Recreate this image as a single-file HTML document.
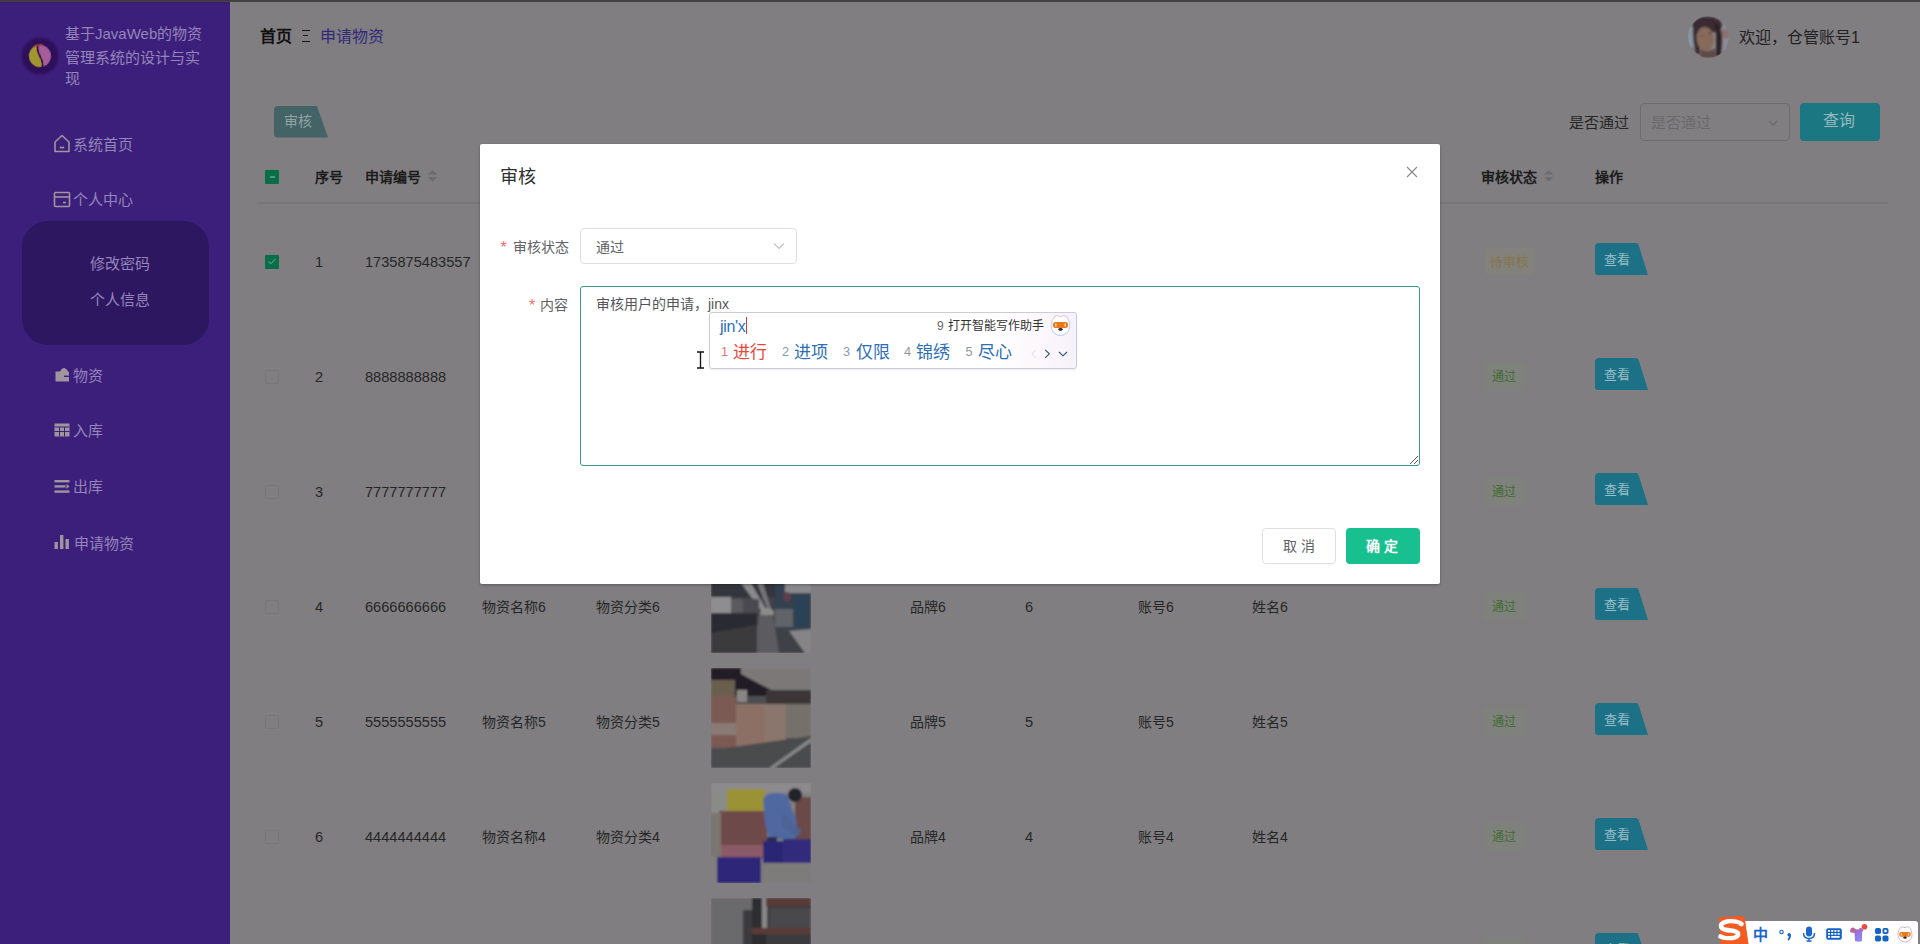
<!DOCTYPE html>
<html lang="zh-CN">
<head>
<meta charset="utf-8">
<style>
*{margin:0;padding:0;box-sizing:border-box}
html,body{width:1920px;height:944px;overflow:hidden}
body{font-family:"Liberation Sans",sans-serif;background:#807e81;position:relative;color:#222}
.t{position:absolute;white-space:nowrap;line-height:1}
.b{position:absolute}
</style>
</head>
<body>

<div class="b" style="left:0;top:0;width:1920px;height:2px;background:#434243"></div>
<div class="b" style="left:0;top:2px;width:230px;height:942px;background:#3c1f7a"></div>
<div class="b" style="left:0;top:0;width:230px;height:1px;background:#45383a"></div><div class="b" style="left:0;top:1px;width:230px;height:1px;background:#4c3e56"></div><div class="b" style="left:0;top:2px;width:230px;height:1px;background:#351d68"></div>
<svg class="b" style="left:18px;top:34px" width="44" height="44" viewBox="0 0 44 44">
<defs><radialGradient id="lg" cx="0.5" cy="0.5" r="0.5"><stop offset="0.6" stop-color="#2b0f55"/><stop offset="0.85" stop-color="#300f5e"/><stop offset="1" stop-color="#3c1f7a"/></radialGradient>
<filter id="lb" x="-20%" y="-20%" width="140%" height="140%"><feGaussianBlur stdDeviation="0.7"/></filter></defs>
<circle cx="22" cy="22" r="20" fill="url(#lg)"/>
<g transform="translate(22 22) rotate(-10)" filter="url(#lb)">
<circle r="11" fill="#a65c98"/>
<path d="M0,-11 A11,11 0 0 0 0,11 C 5,6 -5,-4 0,-11Z" fill="#a3952e"/>
<path d="M0,-11 C -5,-4 5,6 0,11" fill="none" stroke="#2a0c40" stroke-width="1.8"/>
<path d="M-5,-9.8 Q0,-12.5 5,-9.8" fill="none" stroke="#9a4a3a" stroke-width="2" opacity="0.7"/>
</g></svg>
<div class="t" style="left:65.0px;top:26.4px;font-size:15px;color:#9585bb;font-weight:400;">基于JavaWeb的物资</div>
<div class="t" style="left:65.0px;top:49.7px;font-size:15px;color:#9585bb;font-weight:400;">管理系统的设计与实</div>
<div class="t" style="left:65.0px;top:71.4px;font-size:15px;color:#9585bb;font-weight:400;">现</div>
<svg class="b" style="left:53px;top:134px" width="18" height="19" viewBox="0 0 18 19" fill="none" stroke="#a0949f" stroke-width="1.6">
<path d="M2 8 L9 1.5 L16 8 V17.5 H2 Z" stroke-linejoin="round"/><path d="M7 13 Q9 14.5 11 13"/></svg>
<div class="t" style="left:73.0px;top:137.4px;font-size:15px;color:#9585bb;font-weight:400;">系统首页</div>
<svg class="b" style="left:53px;top:191px" width="18" height="17" viewBox="0 0 18 17" fill="none" stroke="#a0949f" stroke-width="1.6">
<rect x="1.5" y="1.5" width="15" height="14" rx="1"/><path d="M1.5 6 H16.5"/><path d="M10 11.5 H13"/></svg>
<div class="t" style="left:73.0px;top:192.2px;font-size:15px;color:#9585bb;font-weight:400;">个人中心</div>
<div class="b" style="left:22px;top:221px;width:187px;height:124px;background:#2d1761;border-radius:26px"></div>
<div class="t" style="left:89.5px;top:255.6px;font-size:15px;color:#9585bb;font-weight:400;">修改密码</div>
<div class="t" style="left:89.5px;top:292.4px;font-size:15px;color:#9585bb;font-weight:400;">个人信息</div>
<svg class="b" style="left:54px;top:367px" width="16" height="15" viewBox="0 0 16 15" fill="#a0949f">
<path d="M1.5 4.5 H6 Q8 0.5 10.5 1 Q13 2 14.5 5 H15 V14.5 H1.5Z"/><path d="M10 8.6 H15.5 V10 H10Z" fill="#3c1f7a"/></svg>
<div class="t" style="left:72.5px;top:367.6px;font-size:15px;color:#9585bb;font-weight:400;">物资</div>
<svg class="b" style="left:54px;top:423px" width="16" height="14" viewBox="0 0 16 14" fill="#a0949f">
<path d="M0.5 0.5H15.5V13.5H0.5Z"/><path d="M0.5 4H15.5M0.5 8.5H15.5M5.5 4V13.5M10.5 4V13.5" stroke="#3c1f7a" stroke-width="1"/></svg>
<div class="t" style="left:73.0px;top:422.9px;font-size:15px;color:#9585bb;font-weight:400;">入库</div>
<svg class="b" style="left:54px;top:480px" width="16" height="13" viewBox="0 0 16 13" fill="#a0949f">
<rect x="0.5" y="0" width="15" height="2.4"/><rect x="0.5" y="5.2" width="11" height="2.4"/><path d="M12.5 3.8 L15.5 6.4 L12.5 9Z"/><rect x="0.5" y="10.4" width="15" height="2.4"/></svg>
<div class="t" style="left:73.0px;top:478.9px;font-size:15px;color:#9585bb;font-weight:400;">出库</div>
<svg class="b" style="left:54px;top:535px" width="16" height="14" viewBox="0 0 16 14" fill="#a0949f">
<rect x="0.5" y="7" width="3.4" height="7"/><rect x="6" y="0" width="3.4" height="14"/><rect x="11.5" y="4" width="3.4" height="10"/></svg>
<div class="t" style="left:74.0px;top:535.7px;font-size:15px;color:#9585bb;font-weight:400;">申请物资</div>
<div class="t" style="left:260.0px;top:28.8px;font-size:16px;color:#111;font-weight:700;">首页</div>
<div class="b" style="left:301.5px;top:29.8px;width:8.5px;height:1.4px;background:#1a1a1a"></div>
<div class="b" style="left:303px;top:35px;width:5px;height:1.4px;background:#1a1a1a"></div>
<div class="b" style="left:301.5px;top:40.8px;width:8.5px;height:1.4px;background:#1a1a1a"></div>
<div class="t" style="left:320.0px;top:29.0px;font-size:16px;color:#33297a;font-weight:400;">申请物资</div>
<svg class="b" style="left:1688px;top:16px" width="41" height="42" viewBox="0 0 41 42">
<defs><clipPath id="avc"><ellipse cx="20.5" cy="21" rx="20.3" ry="21"/></clipPath><filter id="avb" x="-20%" y="-20%" width="140%" height="140%"><feGaussianBlur stdDeviation="1.2"/></filter></defs>
<g clip-path="url(#avc)"><rect width="41" height="42" fill="#8b8c95"/>
<g filter="url(#avb)">
<rect x="0" y="0" width="7" height="42" fill="#8a96a2"/>
<path d="M0 30 L14 34 L18 42 L0 42Z" fill="#857478"/>
<ellipse cx="37" cy="18" rx="6" ry="4.5" fill="#8a7070"/>
<ellipse cx="19" cy="9" rx="15" ry="8.5" fill="#3a2a32"/>
<path d="M5 10 Q4 24 8 38 L12 38 L11 12Z" fill="#3a2c30"/>
<path d="M26 6 Q34 10 34 22 L33 40 L28 40 L28 18Z" fill="#2f2428"/>
<ellipse cx="17.5" cy="23" rx="9" ry="12" fill="#866a5a" transform="rotate(-8 17.5 23)"/>
<path d="M13 33 Q20 38 27 32 L28 42 L12 42Z" fill="#5e4844"/>
<circle cx="22" cy="17.5" r="1" fill="#3a2420"/>
<circle cx="14" cy="20" r="0.8" fill="#5a4038"/>
</g></g></svg>
<div class="t" style="left:1739.0px;top:29.8px;font-size:16px;color:#222;font-weight:400;">欢迎，仓管账号1</div>
<svg class="b" style="left:273px;top:105px" width="57" height="34" viewBox="0 0 57 34">
<path d="M5 1 H44 L55 32.5 H5 Q1 32.5 1 28.5 V5 Q1 1 5 1Z" fill="#446366"/></svg>
<div class="t" style="left:284.0px;top:113.9px;font-size:14px;color:#90a4a5;font-weight:400;">审核</div>
<div class="t" style="left:1569.0px;top:115.0px;font-size:15px;color:#262626;font-weight:400;">是否通过</div>
<div class="b" style="left:1640px;top:103px;width:150px;height:38px;border:1px solid #6e6c6f;border-radius:4px"></div>
<div class="t" style="left:1651.0px;top:115.0px;font-size:15px;color:#6b696c;font-weight:400;">是否通过</div>
<svg class="b" style="left:1768px;top:119px" width="10" height="8" viewBox="0 0 10 8" fill="none" stroke="#6b696c" stroke-width="1.2"><path d="M1 2 L5 6 L9 2"/></svg>
<div class="b" style="left:1800px;top:103px;width:80px;height:38px;background:#1b7782;border-radius:4px"></div>
<div class="t" style="left:1823.0px;top:113.3px;font-size:16px;color:#94babe;font-weight:400;">查询</div>
<div class="b" style="left:265px;top:170px;width:14px;height:14px;background:#096d4a;border-radius:1px"></div>
<div class="b" style="left:269.5px;top:176px;width:5px;height:1.5px;background:#4a9c7c"></div>
<div class="t" style="left:315.0px;top:170.4px;font-size:14px;color:#1c1c1c;font-weight:700;">序号</div>
<div class="t" style="left:365.0px;top:170.4px;font-size:14px;color:#1c1c1c;font-weight:700;">申请编号</div>
<svg class="b" style="left:427px;top:170px" width="11" height="13" viewBox="0 0 11 13" fill="#6d6b6e"><path d="M5.5 0.3 L10.3 4.6 H0.7Z"/><path d="M5.5 11.6 L10.3 7.2 H0.7Z"/></svg>
<div class="t" style="left:1481.0px;top:170.4px;font-size:14px;color:#1c1c1c;font-weight:700;">审核状态</div>
<svg class="b" style="left:1543px;top:170px" width="11" height="13" viewBox="0 0 11 13" fill="#6d6b6e"><path d="M5.5 0.3 L10.3 4.6 H0.7Z"/><path d="M5.5 11.6 L10.3 7.2 H0.7Z"/></svg>
<div class="t" style="left:1595.0px;top:170.4px;font-size:14px;color:#1c1c1c;font-weight:700;">操作</div>
<div class="b" style="left:257px;top:202px;width:1631px;height:2px;background:#777578"></div>
<div class="b" style="left:265px;top:255px;width:14px;height:14px;background:#096d4a;border-radius:1px"></div>
<svg class="b" style="left:265px;top:255px" width="14" height="14" viewBox="0 0 14 14" fill="none" stroke="#52a282" stroke-width="1.1"><path d="M3.5 6.5 L5.8 8.8 L10.5 3.8"/></svg>
<div class="t" style="left:315.0px;top:254.6px;font-size:14.6px;color:#262626;">1</div>
<div class="t" style="left:365.0px;top:254.6px;font-size:14.6px;color:#262626;">1735875483557</div>
<div class="t" style="left:482.0px;top:255.4px;font-size:14px;color:#262626;font-weight:400;">物资名称7</div>
<div class="t" style="left:596.0px;top:255.4px;font-size:14px;color:#262626;font-weight:400;">物资分类7</div>
<div class="t" style="left:910.0px;top:255.4px;font-size:14px;color:#262626;font-weight:400;">品牌7</div>
<div class="t" style="left:1025.0px;top:254.6px;font-size:14.6px;color:#262626;">7</div>
<div class="t" style="left:1138.0px;top:255.4px;font-size:14px;color:#262626;font-weight:400;">账号7</div>
<div class="t" style="left:1252.0px;top:255.4px;font-size:14px;color:#262626;font-weight:400;">姓名7</div>
<div class="b" style="left:1485px;top:248px;width:50px;height:27px;background:#83817b;border-radius:3px"></div>
<div class="t" style="left:1490.0px;top:256.1px;font-size:12.6px;color:#85744a;font-weight:400;">待审核</div>
<svg class="b" style="left:1594px;top:242px" width="56" height="34" viewBox="0 0 56 34"><path d="M5 1 H42 Q44 1 44.6 3 L54 33 H4 Q1 33 1 30 V5 Q1 1 5 1Z" fill="#1c7186"/></svg>
<div class="t" style="left:1604.0px;top:252.9px;font-size:13px;color:#97bcc5;font-weight:400;">查看</div>
<div class="b" style="left:265px;top:370px;width:14px;height:14px;border:1px solid #787679;border-radius:2px"></div>
<div class="t" style="left:315.0px;top:369.6px;font-size:14.6px;color:#262626;">2</div>
<div class="t" style="left:365.0px;top:369.6px;font-size:14.6px;color:#262626;">8888888888</div>
<div class="t" style="left:482.0px;top:370.4px;font-size:14px;color:#262626;font-weight:400;">物资名称8</div>
<div class="t" style="left:596.0px;top:370.4px;font-size:14px;color:#262626;font-weight:400;">物资分类8</div>
<div class="t" style="left:910.0px;top:370.4px;font-size:14px;color:#262626;font-weight:400;">品牌8</div>
<div class="t" style="left:1025.0px;top:369.6px;font-size:14.6px;color:#262626;">8</div>
<div class="t" style="left:1138.0px;top:370.4px;font-size:14px;color:#262626;font-weight:400;">账号8</div>
<div class="t" style="left:1252.0px;top:370.4px;font-size:14px;color:#262626;font-weight:400;">姓名8</div>
<div class="b" style="left:1483px;top:362px;width:43px;height:29px;background:#7f817c;border-radius:3px"></div>
<div class="t" style="left:1491.5px;top:371.4px;font-size:12px;color:#3f6c33;font-weight:400;">通过</div>
<svg class="b" style="left:1594px;top:357px" width="56" height="34" viewBox="0 0 56 34"><path d="M5 1 H42 Q44 1 44.6 3 L54 33 H4 Q1 33 1 30 V5 Q1 1 5 1Z" fill="#1c7186"/></svg>
<div class="t" style="left:1604.0px;top:367.9px;font-size:13px;color:#97bcc5;font-weight:400;">查看</div>
<div class="b" style="left:265px;top:485px;width:14px;height:14px;border:1px solid #787679;border-radius:2px"></div>
<div class="t" style="left:315.0px;top:484.6px;font-size:14.6px;color:#262626;">3</div>
<div class="t" style="left:365.0px;top:484.6px;font-size:14.6px;color:#262626;">7777777777</div>
<div class="t" style="left:482.0px;top:485.4px;font-size:14px;color:#262626;font-weight:400;">物资名称7</div>
<div class="t" style="left:596.0px;top:485.4px;font-size:14px;color:#262626;font-weight:400;">物资分类7</div>
<div class="t" style="left:910.0px;top:485.4px;font-size:14px;color:#262626;font-weight:400;">品牌7</div>
<div class="t" style="left:1025.0px;top:484.6px;font-size:14.6px;color:#262626;">7</div>
<div class="t" style="left:1138.0px;top:485.4px;font-size:14px;color:#262626;font-weight:400;">账号7</div>
<div class="t" style="left:1252.0px;top:485.4px;font-size:14px;color:#262626;font-weight:400;">姓名7</div>
<div class="b" style="left:1483px;top:477px;width:43px;height:29px;background:#7f817c;border-radius:3px"></div>
<div class="t" style="left:1491.5px;top:486.4px;font-size:12px;color:#3f6c33;font-weight:400;">通过</div>
<svg class="b" style="left:1594px;top:472px" width="56" height="34" viewBox="0 0 56 34"><path d="M5 1 H42 Q44 1 44.6 3 L54 33 H4 Q1 33 1 30 V5 Q1 1 5 1Z" fill="#1c7186"/></svg>
<div class="t" style="left:1604.0px;top:482.9px;font-size:13px;color:#97bcc5;font-weight:400;">查看</div>
<div class="b" style="left:265px;top:600px;width:14px;height:14px;border:1px solid #787679;border-radius:2px"></div>
<div class="t" style="left:315.0px;top:599.6px;font-size:14.6px;color:#262626;">4</div>
<div class="t" style="left:365.0px;top:599.6px;font-size:14.6px;color:#262626;">6666666666</div>
<div class="t" style="left:482.0px;top:600.4px;font-size:14px;color:#262626;font-weight:400;">物资名称6</div>
<div class="t" style="left:596.0px;top:600.4px;font-size:14px;color:#262626;font-weight:400;">物资分类6</div>
<svg class="b" style="left:711px;top:553px" width="100" height="100" viewBox="0 0 100 100"><defs><filter id="f4" x="-5%" y="-5%" width="110%" height="110%"><feGaussianBlur stdDeviation="1.3"/></filter><clipPath id="c4"><rect width="100" height="100"/></clipPath></defs>
<g clip-path="url(#c4)" filter="url(#f4)">
<rect width="100" height="100" fill="#414146"/>
<rect x="0" y="28" width="100" height="16" fill="#36363c"/>
<path d="M30 30 L40 30 L56 58 L52 60Z" fill="#8a8a8c"/>
<path d="M46 30 L52 30 L60 56 L57 57Z" fill="#77777a"/>
<rect x="0" y="44" width="20" height="18" fill="#8e8e90"/>
<rect x="20" y="46" width="12" height="14" fill="#5a5a5e"/>
<rect x="0" y="60" width="46" height="20" fill="#2c2c32"/>
<rect x="32" y="46" width="16" height="14" fill="#4a4a50"/>
<ellipse cx="56" cy="60" rx="7" ry="5" fill="#8c8c8a"/>
<path d="M48 62 L62 62 L68 100 L42 100Z" fill="#5c5c60"/>
<rect x="64" y="28" width="36" height="48" fill="#33404f"/>
<rect x="74" y="28" width="26" height="12" fill="#8a8a8e"/>
<rect x="84" y="44" width="12" height="30" fill="#2c4258"/>
<rect x="64" y="56" width="18" height="18" fill="#606468"/>
<ellipse cx="76" cy="44" rx="4" ry="5" fill="#5e3e4c"/>
<path d="M0 80 L46 72 L46 100 L0 100Z" fill="#3a3a3e"/>
<path d="M78 78 L100 76 L100 100 L94 100Z" fill="#858587"/>
</g></svg>
<div class="t" style="left:910.0px;top:600.4px;font-size:14px;color:#262626;font-weight:400;">品牌6</div>
<div class="t" style="left:1025.0px;top:599.6px;font-size:14.6px;color:#262626;">6</div>
<div class="t" style="left:1138.0px;top:600.4px;font-size:14px;color:#262626;font-weight:400;">账号6</div>
<div class="t" style="left:1252.0px;top:600.4px;font-size:14px;color:#262626;font-weight:400;">姓名6</div>
<div class="b" style="left:1483px;top:592px;width:43px;height:29px;background:#7f817c;border-radius:3px"></div>
<div class="t" style="left:1491.5px;top:601.4px;font-size:12px;color:#3f6c33;font-weight:400;">通过</div>
<svg class="b" style="left:1594px;top:587px" width="56" height="34" viewBox="0 0 56 34"><path d="M5 1 H42 Q44 1 44.6 3 L54 33 H4 Q1 33 1 30 V5 Q1 1 5 1Z" fill="#1c7186"/></svg>
<div class="t" style="left:1604.0px;top:597.9px;font-size:13px;color:#97bcc5;font-weight:400;">查看</div>
<div class="b" style="left:265px;top:715px;width:14px;height:14px;border:1px solid #787679;border-radius:2px"></div>
<div class="t" style="left:315.0px;top:714.6px;font-size:14.6px;color:#262626;">5</div>
<div class="t" style="left:365.0px;top:714.6px;font-size:14.6px;color:#262626;">5555555555</div>
<div class="t" style="left:482.0px;top:715.4px;font-size:14px;color:#262626;font-weight:400;">物资名称5</div>
<div class="t" style="left:596.0px;top:715.4px;font-size:14px;color:#262626;font-weight:400;">物资分类5</div>
<svg class="b" style="left:711px;top:668px" width="100" height="100" viewBox="0 0 100 100"><defs><filter id="f5" x="-5%" y="-5%" width="110%" height="110%"><feGaussianBlur stdDeviation="1.1"/></filter><clipPath id="c5"><rect width="100" height="100"/></clipPath></defs>
<g clip-path="url(#c5)" filter="url(#f5)">
<rect width="100" height="100" fill="#4c4e50"/>
<rect x="0" y="0" width="60" height="28" fill="#221e28"/>
<path d="M30 0 L100 0 L100 25 L60 22 L30 6Z" fill="#7c7878"/>
<rect x="55" y="22" width="45" height="14" fill="#3a3438"/>
<rect x="0" y="12" width="24" height="16" fill="#6a5e50"/>
<rect x="26" y="22" width="10" height="12" fill="#8a8684"/>
<rect x="0" y="28" width="25" height="52" fill="#7a5a52"/>
<rect x="25" y="36" width="28" height="44" fill="#8c7066"/>
<rect x="53" y="36" width="22" height="40" fill="#8a766c"/>
<rect x="75" y="36" width="25" height="34" fill="#76706a"/>
<rect x="0" y="55" width="25" height="12" fill="#8a7a74"/>
<path d="M0 82 L100 68 L100 100 L0 100Z" fill="#4a4c4e"/>
<path d="M58 100 L100 70 L100 74 L63 100Z" fill="#8a8a8a"/>
</g></svg>
<div class="t" style="left:910.0px;top:715.4px;font-size:14px;color:#262626;font-weight:400;">品牌5</div>
<div class="t" style="left:1025.0px;top:714.6px;font-size:14.6px;color:#262626;">5</div>
<div class="t" style="left:1138.0px;top:715.4px;font-size:14px;color:#262626;font-weight:400;">账号5</div>
<div class="t" style="left:1252.0px;top:715.4px;font-size:14px;color:#262626;font-weight:400;">姓名5</div>
<div class="b" style="left:1483px;top:707px;width:43px;height:29px;background:#7f817c;border-radius:3px"></div>
<div class="t" style="left:1491.5px;top:716.4px;font-size:12px;color:#3f6c33;font-weight:400;">通过</div>
<svg class="b" style="left:1594px;top:702px" width="56" height="34" viewBox="0 0 56 34"><path d="M5 1 H42 Q44 1 44.6 3 L54 33 H4 Q1 33 1 30 V5 Q1 1 5 1Z" fill="#1c7186"/></svg>
<div class="t" style="left:1604.0px;top:712.9px;font-size:13px;color:#97bcc5;font-weight:400;">查看</div>
<div class="b" style="left:265px;top:830px;width:14px;height:14px;border:1px solid #787679;border-radius:2px"></div>
<div class="t" style="left:315.0px;top:829.6px;font-size:14.6px;color:#262626;">6</div>
<div class="t" style="left:365.0px;top:829.6px;font-size:14.6px;color:#262626;">4444444444</div>
<div class="t" style="left:482.0px;top:830.4px;font-size:14px;color:#262626;font-weight:400;">物资名称4</div>
<div class="t" style="left:596.0px;top:830.4px;font-size:14px;color:#262626;font-weight:400;">物资分类4</div>
<svg class="b" style="left:711px;top:783px" width="100" height="100" viewBox="0 0 100 100"><defs><filter id="f6" x="-5%" y="-5%" width="110%" height="110%"><feGaussianBlur stdDeviation="1.1"/></filter><clipPath id="c6"><rect width="100" height="100"/></clipPath></defs>
<g clip-path="url(#c6)" filter="url(#f6)">
<rect width="100" height="100" fill="#82807e"/>
<rect x="0" y="0" width="100" height="10" fill="#8c8a8c"/>
<rect x="0" y="10" width="16" height="20" fill="#8a8a86"/>
<rect x="16" y="6" width="38" height="26" fill="#9a9234"/>
<rect x="8" y="28" width="48" height="36" fill="#6e4a4a"/>
<rect x="84" y="14" width="16" height="52" fill="#6a4a4a"/>
<rect x="0" y="30" width="10" height="44" fill="#7a7670"/>
<path d="M52 16 Q60 6 76 12 L86 40 L84 56 L58 56 L54 40Z" fill="#5068a0"/>
<path d="M72 30 L90 48 L86 54 L70 42Z" fill="#4e6494"/>
<circle cx="84" cy="12" r="7" fill="#24202a"/>
<rect x="56" y="54" width="10" height="14" fill="#2a2a50"/>
<rect x="10" y="62" width="44" height="14" fill="#8a5a68"/>
<rect x="6" y="74" width="44" height="26" fill="#2e2878"/>
<rect x="52" y="58" width="22" height="24" fill="#2c2874"/>
<rect x="72" y="56" width="28" height="24" fill="#322a7a"/>
<rect x="50" y="80" width="50" height="20" fill="#7e7c7a"/>
</g></svg>
<div class="t" style="left:910.0px;top:830.4px;font-size:14px;color:#262626;font-weight:400;">品牌4</div>
<div class="t" style="left:1025.0px;top:829.6px;font-size:14.6px;color:#262626;">4</div>
<div class="t" style="left:1138.0px;top:830.4px;font-size:14px;color:#262626;font-weight:400;">账号4</div>
<div class="t" style="left:1252.0px;top:830.4px;font-size:14px;color:#262626;font-weight:400;">姓名4</div>
<div class="b" style="left:1483px;top:822px;width:43px;height:29px;background:#7f817c;border-radius:3px"></div>
<div class="t" style="left:1491.5px;top:831.4px;font-size:12px;color:#3f6c33;font-weight:400;">通过</div>
<svg class="b" style="left:1594px;top:817px" width="56" height="34" viewBox="0 0 56 34"><path d="M5 1 H42 Q44 1 44.6 3 L54 33 H4 Q1 33 1 30 V5 Q1 1 5 1Z" fill="#1c7186"/></svg>
<div class="t" style="left:1604.0px;top:827.9px;font-size:13px;color:#97bcc5;font-weight:400;">查看</div>
<div class="b" style="left:265px;top:945px;width:14px;height:14px;border:1px solid #787679;border-radius:2px"></div>
<div class="t" style="left:315.0px;top:944.6px;font-size:14.6px;color:#262626;">7</div>
<div class="t" style="left:365.0px;top:944.6px;font-size:14.6px;color:#262626;">3333333333</div>
<div class="t" style="left:482.0px;top:945.4px;font-size:14px;color:#262626;font-weight:400;">物资名称3</div>
<div class="t" style="left:596.0px;top:945.4px;font-size:14px;color:#262626;font-weight:400;">物资分类3</div>
<svg class="b" style="left:711px;top:898px" width="100" height="100" viewBox="0 0 100 100"><defs><filter id="f7" x="-5%" y="-5%" width="110%" height="110%"><feGaussianBlur stdDeviation="1"/></filter><clipPath id="c7"><rect width="100" height="100"/></clipPath></defs>
<g clip-path="url(#c7)" filter="url(#f7)">
<rect width="100" height="100" fill="#3a3a3c"/>
<rect x="0" y="0" width="41" height="100" fill="#6a696c"/>
<rect x="32" y="12" width="9" height="40" fill="#3a3a3c"/>
<rect x="41" y="0" width="14" height="100" fill="#2e2e30"/>
<rect x="51" y="0" width="5" height="30" fill="#888"/>
<rect x="55" y="0" width="45" height="8" fill="#5a3a38"/>
<rect x="58" y="10" width="42" height="20" fill="#4a4a4c"/>
<rect x="41" y="30" width="59" height="6" fill="#5a3a38"/>
</g></svg>
<div class="t" style="left:910.0px;top:945.4px;font-size:14px;color:#262626;font-weight:400;">品牌3</div>
<div class="t" style="left:1025.0px;top:944.6px;font-size:14.6px;color:#262626;">3</div>
<div class="t" style="left:1138.0px;top:945.4px;font-size:14px;color:#262626;font-weight:400;">账号3</div>
<div class="t" style="left:1252.0px;top:945.4px;font-size:14px;color:#262626;font-weight:400;">姓名3</div>
<div class="b" style="left:1483px;top:937px;width:43px;height:29px;background:#7f817c;border-radius:3px"></div>
<div class="t" style="left:1491.5px;top:946.4px;font-size:12px;color:#3f6c33;font-weight:400;">通过</div>
<svg class="b" style="left:1594px;top:932px" width="56" height="34" viewBox="0 0 56 34"><path d="M5 1 H42 Q44 1 44.6 3 L54 33 H4 Q1 33 1 30 V5 Q1 1 5 1Z" fill="#1c7186"/></svg>
<div class="t" style="left:1604.0px;top:942.9px;font-size:13px;color:#97bcc5;font-weight:400;">查看</div>
<style>.imgs svg{position:absolute}</style>
<div class="b" style="left:480px;top:144px;width:960px;height:440px;background:#fff;border-radius:2px;box-shadow:0 1px 3px rgba(0,0,0,0.3)"></div>
<div class="t" style="left:500.0px;top:168.0px;font-size:18px;color:#303133;font-weight:400;">审核</div>
<svg class="b" style="left:1406px;top:166px" width="12" height="12" viewBox="0 0 12 12" stroke="#8a8a8f" stroke-width="1.2"><path d="M1 1 L11 11 M11 1 L1 11"/></svg>
<div class="t" style="left:500.5px;top:239.5px;font-size:16px;color:#f56c6c;font-weight:400;">*</div>
<div class="t" style="left:512.5px;top:239.6px;font-size:14px;color:#606266;font-weight:400;">审核状态</div>
<div class="b" style="left:580px;top:228px;width:217px;height:36px;border:1px solid #dcdfe6;border-radius:4px"></div>
<div class="t" style="left:595.5px;top:239.6px;font-size:14px;color:#606266;font-weight:400;">通过</div>
<svg class="b" style="left:773px;top:242px" width="12" height="8" viewBox="0 0 12 8" fill="none" stroke="#c0c4cc" stroke-width="1.1"><path d="M1 1.5 L6 6.5 L11 1.5"/></svg>
<div class="t" style="left:529.0px;top:297.5px;font-size:16px;color:#f56c6c;font-weight:400;">*</div>
<div class="t" style="left:539.5px;top:297.9px;font-size:14px;color:#606266;font-weight:400;">内容</div>
<div class="b" style="left:580px;top:286px;width:840px;height:180px;border:1.4px solid #3a9e84;border-radius:3px"></div>
<svg class="b" style="left:1409px;top:455px" width="10" height="10" viewBox="0 0 10 10" stroke="#555" stroke-width="1"><path d="M1 9 L9 1 M5 9 L9 5"/></svg>
<div class="t" style="left:596.0px;top:297.4px;font-size:14px;color:#555558;font-weight:400;">审核用户的申请，jinx</div>
<div class="b" style="left:1262px;top:528px;width:74px;height:36px;border:1px solid #dcdfe6;border-radius:4px;background:#fff"></div>
<div class="t" style="left:1283.0px;top:539.4px;font-size:14px;color:#606266;font-weight:400;">取 消</div>
<div class="b" style="left:1346px;top:528px;width:74px;height:36px;border-radius:4px;background:#18c08f"></div>
<div class="t" style="left:1366.0px;top:539.4px;font-size:14px;color:#fff;font-weight:700;">确 定</div>
<div class="b" style="left:709px;top:312px;width:368px;height:57px;border:1px solid #c9ccd6;border-radius:3px;background:linear-gradient(90deg,#fff 0 78%,#fbf6fb 92%,#f6f2fa 100%);box-shadow:0 1px 2px rgba(0,0,0,0.08)"></div>
<div class="t" style="left:720.0px;top:318.5px;font-size:16px;color:#2b6fc2;font-weight:400;letter-spacing:-0.3px;">jin'x</div>
<div class="b" style="left:746px;top:317px;width:1.3px;height:17px;background:#d23a2a"></div>
<div class="t" style="left:721.0px;top:346.0px;font-size:12.8px;color:#e57373;font-weight:400;">1</div>
<div class="t" style="left:732.5px;top:344.0px;font-size:17px;color:#e8473c;font-weight:400;">进行</div>
<div class="t" style="left:782.0px;top:346.0px;font-size:12.8px;color:#8d9aa6;font-weight:400;">2</div>
<div class="t" style="left:793.5px;top:344.0px;font-size:17px;color:#2e6fb7;font-weight:400;">进项</div>
<div class="t" style="left:843.0px;top:346.0px;font-size:12.8px;color:#8d9aa6;font-weight:400;">3</div>
<div class="t" style="left:855.5px;top:344.0px;font-size:17px;color:#2e6fb7;font-weight:400;">仅限</div>
<div class="t" style="left:904.0px;top:346.0px;font-size:12.8px;color:#8d9aa6;font-weight:400;">4</div>
<div class="t" style="left:916.0px;top:344.0px;font-size:17px;color:#2e6fb7;font-weight:400;">锦绣</div>
<div class="t" style="left:965.5px;top:346.0px;font-size:12.8px;color:#8d9aa6;font-weight:400;">5</div>
<div class="t" style="left:977.5px;top:344.0px;font-size:17px;color:#2e6fb7;font-weight:400;">尽心</div>
<svg class="b" style="left:1044px;top:349px" width="7" height="10" viewBox="0 0 7 10" fill="none" stroke="#2d4f82" stroke-width="1.1"><path d="M1.2 0.8 L5.3 4.8 L1.2 8.8"/></svg>
<svg class="b" style="left:1058px;top:351px" width="10" height="6" viewBox="0 0 10 6" fill="none" stroke="#2d4f82" stroke-width="1.1"><path d="M1 1 L5 4.8 L9 1"/></svg>
<svg class="b" style="left:1031px;top:349px" width="6" height="10" viewBox="0 0 6 10" fill="none" stroke="#e4e4ea" stroke-width="1.1"><path d="M4.5 0.8 L1 4.8 L4.5 8.8"/></svg>
<div class="t" style="left:937.0px;top:319.7px;font-size:12px;color:#666;font-weight:400;">9</div>
<div class="t" style="left:947.5px;top:319.7px;font-size:12px;color:#333;font-weight:400;">打开智能写作助手</div>
<svg class="b" style="left:1050px;top:314px" width="21" height="22" viewBox="0 0 21 22">
<defs><linearGradient id="mg" x1="0" y1="0" x2="0" y2="1"><stop offset="0" stop-color="#eab0d0"/><stop offset="1" stop-color="#a8c8ee"/></linearGradient></defs>
<path d="M10.5 2.8 Q13.5 0.6 16.2 2.2 Q19.8 6 19.8 12.2 A9.3 9.3 0 0 1 1.2 12.2 Q1.2 6 4.8 2.2 Q7.5 0.6 10.5 2.8Z" fill="#fff" stroke="url(#mg)" stroke-width="0.9"/>
<rect x="3" y="8" width="15" height="6" rx="2.5" fill="#e8781e"/>
<rect x="5" y="9.2" width="1.6" height="3.6" rx="0.8" fill="#f8d080"/><rect x="14.4" y="9.2" width="1.6" height="3.6" rx="0.8" fill="#f8d080"/>
<ellipse cx="10.5" cy="15.4" rx="2.2" ry="1.4" fill="#2a2a2a"/></svg>
<svg class="b" style="left:695px;top:351px" width="11" height="18" viewBox="0 0 11 18" fill="none" stroke="#111" stroke-width="1.3"><path d="M2 1 H9 M5.5 1 V17 M2 17 H9"/></svg>
<div class="b" style="left:1742px;top:921px;width:176px;height:23px;background:#fff;border-radius:0 3px 0 0"></div>
<svg class="b" style="left:1714px;top:915px" width="36" height="29" viewBox="0 0 36 29">
<path d="M5 5 Q4 2.5 7 2.2 L26 1 Q30 0.8 31 4 L34.5 29 H6.5Z" fill="#f25c22"/>
<path d="M27.5 9 Q22 5.5 13 6.5 Q5.5 8 7.5 12.5 Q9 15 17 15.5 Q25 16.5 24 20 Q22.5 23.5 13 23 Q9 22.8 6.5 21.5" fill="none" stroke="#fff" stroke-width="4.6" stroke-linecap="round"/>
<path d="M24 10 Q19 8.8 14 9.5" fill="none" stroke="#f25c22" stroke-width="1.3" stroke-linecap="round"/>
<path d="M11 20 Q16 20.6 20 19.8" fill="none" stroke="#f25c22" stroke-width="1.3" stroke-linecap="round"/></svg>
<div class="t" style="left:1753.0px;top:926.5px;font-size:15px;color:#1a66cc;font-weight:700;">中</div>
<svg class="b" style="left:1779px;top:927px" width="14" height="14" viewBox="0 0 14 14"><circle cx="2.5" cy="5" r="1.7" fill="none" stroke="#1a66cc" stroke-width="1.1"/><path d="M9.5 7 Q11.5 7 11 9.5 Q10.5 12 9 13" fill="none" stroke="#1a66cc" stroke-width="1.8"/><circle cx="10" cy="7.8" r="1.6" fill="#1a66cc"/></svg>
<svg class="b" style="left:1802px;top:926px" width="14" height="16" viewBox="0 0 14 16"><rect x="4" y="0.5" width="6" height="10" rx="3" fill="#1a66cc"/><path d="M1.5 7 Q1.5 12.5 7 12.5 Q12.5 12.5 12.5 7" fill="none" stroke="#1a66cc" stroke-width="1.4"/><path d="M7 12.5V15M4.5 15H9.5" stroke="#1a66cc" stroke-width="1.4"/></svg>
<svg class="b" style="left:1825.5px;top:928px" width="16" height="12" viewBox="0 0 16 12"><rect x="0.2" y="0.2" width="15.6" height="11.6" rx="2" fill="#1562c6"/><g fill="#fff"><rect x="2" y="2" width="2" height="1.8"/><rect x="5.2" y="2" width="2" height="1.8"/><rect x="8.4" y="2" width="2" height="1.8"/><rect x="11.6" y="2" width="2" height="1.8"/><rect x="2" y="5" width="2" height="1.8"/><rect x="5.2" y="5" width="2" height="1.8"/><rect x="8.4" y="5" width="2" height="1.8"/><rect x="11.6" y="5" width="2" height="1.8"/><rect x="2" y="8" width="2" height="1.8"/><rect x="5.2" y="8" width="8.4" height="1.8"/></g></svg>
<svg class="b" style="left:1849px;top:923px" width="20" height="20" viewBox="0 0 20 20"><defs><linearGradient id="sg" x1="0" y1="0" x2="0.6" y2="1"><stop offset="0" stop-color="#c86060"/><stop offset="0.5" stop-color="#a070d8"/><stop offset="1" stop-color="#8a8af8"/></linearGradient></defs><path d="M1 7 Q2 4 4.5 4.5 Q7 7 9 6.5 L12 4.5 L14.5 7 L13 9.5 L13 18 Q10 19.5 6 18 L5.5 10 L1.5 9.5Z" fill="url(#sg)"/><circle cx="15.5" cy="3.8" r="2.8" fill="#ee4a3a"/></svg>
<svg class="b" style="left:1875px;top:928px" width="14" height="14" viewBox="0 0 14 14" fill="#1562c6"><rect x="0" y="0" width="6" height="6" rx="1.8"/><rect x="7.5" y="0" width="6" height="6" rx="1.8"/><rect x="9.3" y="1.8" width="2.4" height="2.4" fill="#fff"/><rect x="0" y="7.5" width="6" height="6" rx="1.8"/><rect x="7.5" y="7.5" width="6" height="6" rx="1.8"/></svg>
<svg class="b" style="left:1897px;top:925px" width="16" height="18" viewBox="0 0 21 22">
<path d="M10.5 2.8 Q13.5 0.6 16.2 2.2 Q19.8 6 19.8 12.2 A9.3 9.3 0 0 1 1.2 12.2 Q1.2 6 4.8 2.2 Q7.5 0.6 10.5 2.8Z" fill="#fff" stroke="#d8a0c8" stroke-width="1.1"/>
<rect x="3" y="8.5" width="15" height="6" rx="2.5" fill="#e8781e"/>
<rect x="5" y="9.7" width="1.8" height="3.6" rx="0.8" fill="#f8d080"/><rect x="14.2" y="9.7" width="1.8" height="3.6" rx="0.8" fill="#f8d080"/>
<ellipse cx="10.5" cy="15.8" rx="2.4" ry="1.5" fill="#2a2a2a"/></svg>
</body></html>
